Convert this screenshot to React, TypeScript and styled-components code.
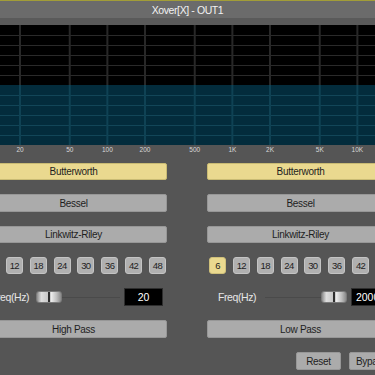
import React, { FC } from 'react'
import styled, { createGlobalStyle } from 'styled-components'

const GlobalStyle = createGlobalStyle`
    html, body {
        margin: 0;
        padding: 0;
        background: #555555;
    }
    body {
        font-family: "Liberation Sans", Arial, sans-serif;
    }
`

const Frame = styled.div`
    width: 375px;
    height: 375px;
    overflow: hidden;
    background: #555555;
    border-top: 1px solid #a29d38;
    box-sizing: border-box;
`

const TitleBar = styled.div`
    height: 17px;
    background: #6b6b6b;
    color: #f2f2f2;
    font-size: 10.5px;
    letter-spacing: -0.4px;
    display: flex;
    align-items: center;
    justify-content: center;
`

const Band = styled.div`
    height: 7px;
    background: #5a5a5a;
`

const GraphSvg = styled.svg`
    display: block;
`

const Panel = styled.div`
    margin-left: -20px;
    width: 414px;
    padding-top: 7px;
    display: grid;
    grid-template-columns: 187px 187px;
    column-gap: 40px;
`

const Column = styled.div`
    display: flex;
    flex-direction: column;
    gap: 14px;
`

const Button = styled.div<{ active?: boolean; h?: number }>`
    height: ${({ h }) => h || 17}px;
    box-sizing: border-box;
    border: 1px solid ${({ active }) => active ? '#c9bb74' : '#979797'};
    border-radius: 2px;
    background: ${({ active }) => active ? '#ead98f' : '#ababab'};
    color: #1e1e1e;
    font-size: 10px;
    letter-spacing: -0.3px;
    display: flex;
    align-items: center;
    justify-content: center;
`

const SlopeRow = styled.div`
    height: 17px;
    padding: 0 1px 0 2px;
    display: flex;
    justify-content: space-between;
`

const SlopeBox = styled.div<{ active?: boolean }>`
    width: 17px;
    height: 17px;
    box-sizing: border-box;
    border: 1px solid ${({ active }) => active ? '#cfc07a' : '#c4c4c4'};
    border-radius: 3px;
    background: ${({ active }) => active ? '#ead98f' : '#b0b0b0'};
    color: #1e1e1e;
    font-size: 9.5px;
    letter-spacing: -0.6px;
    display: flex;
    align-items: center;
    justify-content: center;
`

const FreqRow = styled.div`
    height: 18px;
    padding-left: 11px;
    display: flex;
    align-items: center;
`

const FreqLabel = styled.span`
    width: 45px;
    color: #e6e6e6;
    font-size: 10.5px;
    letter-spacing: -0.4px;
`

const Track = styled.div`
    position: relative;
    width: 84px;
    height: 12px;
    margin-right: 4px;
    &::before {
        content: '';
        position: absolute;
        left: 2px;
        right: 0;
        top: 6px;
        height: 1px;
        background: #4a4a4a;
    }
`

const Thumb = styled.div`
    position: absolute;
    top: 0;
    width: 26px;
    height: 12px;
    box-sizing: border-box;
    border: 1px solid #7a7a7a;
    border-radius: 3px;
    background: linear-gradient(to right, #8c8c8c 0%, #dedede 18%, #c9c9c9 44%, #2e2e2e 47%, #2e2e2e 53%, #f2f2f2 57%, #bdbdbd 82%, #8a8a8a 100%);
`

const ValueBox = styled.div`
    width: 39px;
    height: 18px;
    box-sizing: border-box;
    background: #000000;
    border: 1px solid #2e2e2e;
    color: #ffffff;
    font-size: 10.5px;
    display: flex;
    align-items: center;
    justify-content: center;
`

const Footer = styled.div`
    grid-column: 2;
    margin-top: 14px;
    display: flex;
    justify-content: flex-end;
    gap: 8px;
`

const SmallButton = styled(Button)`
    width: 45px;
    height: 18px;
`

// log scale: one decade = 125px, 20Hz at x=20
const FREQS = [20, 50, 100, 200, 500, 1000, 2000, 5000, 10000, 20000]
const LABELS = ['20', '50', '100', '200', '500', '1K', '2K', '5K', '10K']
const fx = (f: number) => 20 + 125 * Math.log10(f / 20)

const Graph: FC = () => {
    const rows = [10, 20, 30, 40, 50, 70, 80, 90, 100, 110]
    return (
        <GraphSvg width={375} height={131}>
            <rect x={0} y={0} width={375} height={60} fill="#000000" />
            <rect x={0} y={60} width={375} height={60} fill="#032c3c" />
            {rows.map(y => (
                <rect key={y} x={0} y={y} width={375} height={1} fill={y < 60 ? '#2a2a2a' : '#124658'} />
            ))}
            {FREQS.map(f => (
                <g key={f}>
                    <rect x={fx(f) - 1} y={0} width={2} height={60} fill="#282828" />
                    <rect x={fx(f) - 1} y={60} width={2} height={60} fill="#0f4254" />
                </g>
            ))}
            {LABELS.map((l, i) => (
                <text key={l} x={fx(FREQS[i])} y={127} fill="#d8d8d8" fontSize={6.5}
                    fontFamily="Liberation Sans, Arial, sans-serif" textAnchor="middle">
                    {l}
                </text>
            ))}
        </GraphSvg>
    )
}

const SLOPES = [6, 12, 18, 24, 30, 36, 42, 48]

type ChannelProps = { slope: number, value: string, pos: number, pass: string }

const Channel: FC<ChannelProps> = ({ slope, value, pos, pass }) => (
    <Column>
        <Button active>Butterworth</Button>
        <Button h={18}>Bessel</Button>
        <Button>Linkwitz-Riley</Button>
        <SlopeRow>
            {SLOPES.map(s => <SlopeBox key={s} active={s === slope}>{s}</SlopeBox>)}
        </SlopeRow>
        <FreqRow>
            <FreqLabel>Freq(Hz)</FreqLabel>
            <Track>
                <Thumb style={{ left: pos * 58 }} />
            </Track>
            <ValueBox>{value}</ValueBox>
        </FreqRow>
        <Button h={18}>{pass}</Button>
    </Column>
)

const App: FC = () => (
    <Frame>
        <GlobalStyle />
        <TitleBar>Xover[X] - OUT1</TitleBar>
        <Band />
        <Graph />
        <Panel>
            <Channel slope={0} value="20" pos={0} pass="High Pass" />
            <Channel slope={6} value="20000" pos={1} pass="Low Pass" />
            <Footer>
                <SmallButton>Reset</SmallButton>
                <SmallButton>Bypass</SmallButton>
            </Footer>
        </Panel>
    </Frame>
)

export default App
